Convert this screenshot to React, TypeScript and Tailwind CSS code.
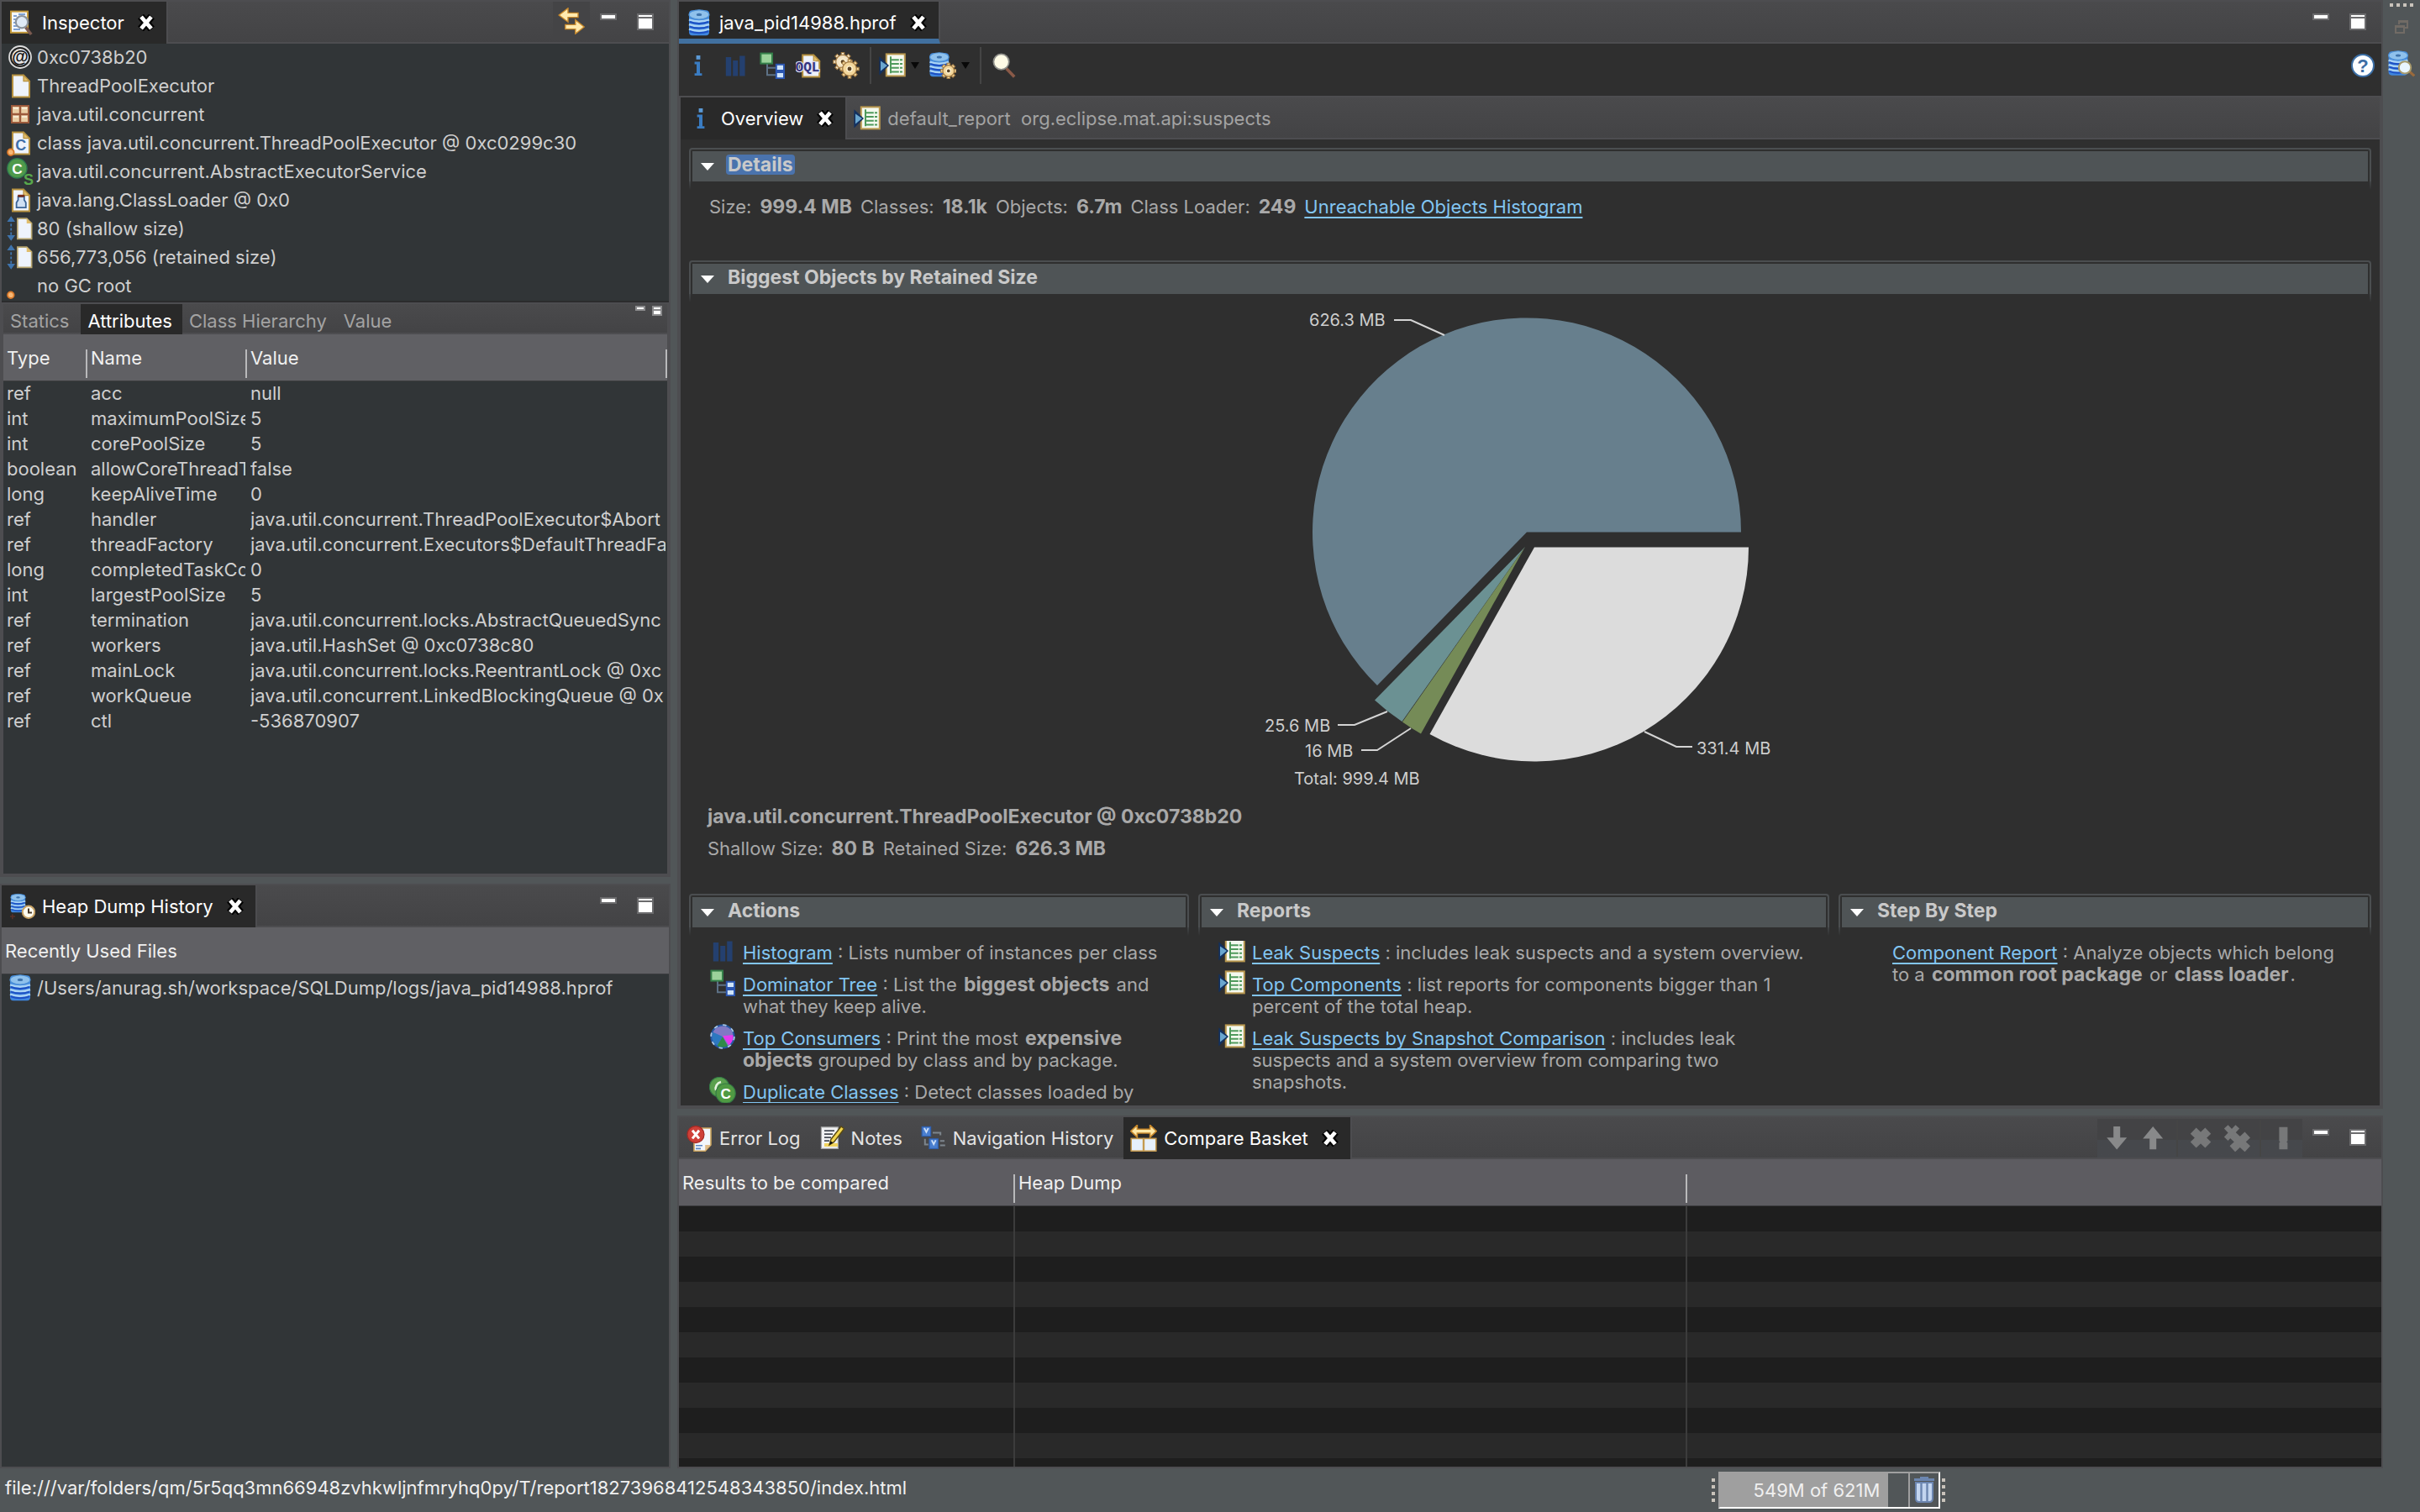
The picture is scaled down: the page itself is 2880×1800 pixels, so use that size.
import type { ReactNode } from "react";

/* ------------------------------------------------------------------ icons */

function Icon({ children, className = "" }: { children: ReactNode; className?: string }) {
  return (
    <svg viewBox="0 0 16 16" aria-hidden="true" className={`block size-8 shrink-0 ${className}`}>
      {children}
    </svg>
  );
}

const glyph = "'Liberation Sans', Arial, sans-serif";

const Cylinder = () => (
  <>
    <rect x="2" y="0.6" width="12" height="15" rx="2" fill="#3f86dd" />
    <path d="M2 6.2q6 2.2 12 0M2 9q6 2.2 12 0M2 11.8q6 2.2 12 0" stroke="#a9d3f5" strokeWidth="1.3" fill="none" />
    <path d="M2.4 7.5q5.6 2 11.2 0M2.4 10.3q5.6 2 11.2 0M2.4 13.1q5.6 2 11.2 0" stroke="#1c4fc4" strokeWidth="1" fill="none" />
    <ellipse cx="8" cy="3.2" rx="6" ry="2.8" fill="#8fc1ec" stroke="#4f93d8" strokeWidth="0.6" />
    <ellipse cx="8" cy="3.2" rx="1.6" ry="0.8" fill="#3f74ad" />
  </>
);

const DumpIcon = () => (
  <Icon>
    <Cylinder />
  </Icon>
);

const Gear = ({ cx, cy, r, fill = "#f3d79c", stroke = "#a07840" }: { cx: number; cy: number; r: number; fill?: string; stroke?: string }) => (
  <g transform={`translate(${cx} ${cy})`}>
    {[0, 45, 90, 135].map((a) => (
      <rect key={a} x={-r} y={-0.9} width={r * 2} height={1.8} fill={fill} stroke={stroke} strokeWidth="0.5" transform={`rotate(${a})`} />
    ))}
    <circle r={r * 0.74} fill={fill} stroke={stroke} strokeWidth="0.6" />
    <circle r={r * 0.28} fill="#5a4326" stroke="#fff3d2" strokeWidth="0.7" />
  </g>
);

const InspectorIcon = () => (
  <Icon>
    <rect x="1.5" y="1.3" width="10" height="12.6" fill="#f4f8fd" stroke="#c49a3c" />
    <path d="M3 4h2M3 6h2M3 8h2M3 10h2M3 12h4M6 3h4" stroke="#5b86c4" strokeWidth="0.8" />
    <circle cx="8" cy="7.6" r="3.6" fill="#dfeaf6" stroke="#8c949c" strokeWidth="1.1" />
    <path d="M10.3 10.8 13.6 15" stroke="#7a5a50" strokeWidth="1.8" />
  </Icon>
);

const HistoryIcon = () => (
  <Icon>
    <g transform="translate(0 0.4) scale(0.72)">
      <Cylinder />
    </g>
    <path d="M1 14h3M2.4 12.6v3" stroke="#5a3028" strokeWidth="0.8" />
    <circle cx="12" cy="11.4" r="3.6" fill="#fffdf0" stroke="#c9a468" />
    <path d="M12 9.2v2.6h2" stroke="#4b3a2a" fill="none" strokeWidth="1" />
  </Icon>
);

const AtIcon = () => (
  <Icon>
    <circle cx="8" cy="8" r="6.5" fill="#222" stroke="#dcdcdc" strokeWidth="0.9" />
    <circle cx="8" cy="8" r="5" fill="#e4e4e4" />
    <text x="8" y="11.2" textAnchor="middle" fontSize="10" fontWeight="700" fill="#111" fontFamily={glyph}>@</text>
  </Icon>
);

const PagePath = ({ x = 3 }: { x?: number }) => (
  <g transform={`translate(${x} 1.3)`}>
    <path d="M.5.5H7L10.5 4v9.5H.5z" fill="#eef3fc" stroke="#b6913f" />
    <path d="M7 .5V4h3.5z" fill="#e0bd6c" stroke="#b6913f" strokeWidth="0.6" />
  </g>
);

const Dot = () => <circle cx="2.4" cy="13.6" r="1.9" fill="#f7b774" stroke="#d9792b" strokeWidth="0.9" />;

const PageIcon = () => (
  <Icon>
    <PagePath />
  </Icon>
);

const PackageIcon = () => (
  <Icon>
    <rect x="3" y="3" width="10" height="10" fill="#e9cda4" stroke="#9c5a3c" />
    <path d="M8 2.6v10.8M2.6 8h10.8" stroke="#9c5a3c" strokeWidth="1.2" />
    <path d="M4 4.5h3M9 4.5h3M4 9.5h3M9 9.5h3" stroke="#f8ead2" strokeWidth="1" />
  </Icon>
);

const ClassFileIcon = () => (
  <Icon>
    <PagePath />
    <text x="8.4" y="12.4" textAnchor="middle" fontSize="9" fontWeight="700" fill="#3f6fa8" fontFamily={glyph}>C</text>
    <Dot />
  </Icon>
);

const SuperClassIcon = () => (
  <Icon>
    <circle cx="6.2" cy="6.2" r="5.8" fill="#4f9a4b" stroke="#2f7a50" strokeWidth="0.7" />
    <text x="6.2" y="9.3" textAnchor="middle" fontSize="8.6" fontWeight="700" fill="#fff" fontFamily={glyph}>C</text>
    <text x="13" y="15.8" textAnchor="middle" fontSize="9" fontWeight="700" fill="#58a84c" fontFamily={glyph}>S</text>
  </Icon>
);

const LoaderIcon = () => (
  <Icon>
    <PagePath />
    <path d="M6.8 6h3.6v2l1 1.6v3H5.8v-3l1-1.6z" fill="#cfe0f4" stroke="#3b6496" strokeWidth="0.9" />
    <path d="M6.6 5.6h4" stroke="#7a2f1c" strokeWidth="1.4" />
  </Icon>
);

const SizeIcon = () => (
  <Icon>
    <path d="M2.6 2.5v11" stroke="#3f74ad" strokeWidth="0.9" strokeDasharray="1.6 1" />
    <path d="M2.6.6 5 4H.2zM2.6 15.4l2.4-3.4H.2z" fill="#3f74ad" />
    <g transform="translate(6 1.6) scale(.84)">
      <path d="M.5.5H7L10.5 4v11H.5z" fill="#eef3fc" stroke="#b6a56f" />
      <path d="M7 .5V4h3.5z" fill="#e0bd6c" />
    </g>
  </Icon>
);

const RootIcon = () => (
  <Icon>
    <Dot />
  </Icon>
);

const SyncIcon = () => (
  <Icon>
    <path d="M6 .4v2.8h6v2.6H6v2.8L.6 4.5z" fill="#ffeab0" stroke="#c98a2c" strokeWidth="0.7" />
    <path d="M10.4 7.4v2.8H4.4v2.6h6v2.8l5.2-4.1z" fill="#ffeab0" stroke="#c98a2c" strokeWidth="0.7" />
  </Icon>
);

const InfoIcon = () => (
  <Icon>
    <path d="M5.8 5.8h3.2v6.8h1.2v1.4H5.8v-1.4H7V7.2H5.8z" fill="#3a7cc2" />
    <rect x="6.8" y="2" width="2.4" height="2.4" fill="#5b9ad6" />
  </Icon>
);

const BarsIcon = () => (
  <Icon>
    <path d="M2.4 3h3.2v11.2H2.4zM6.6 5h3v9.2h-3zM10.6 2.2h3.2v12h-3.2z" fill="#24406f" />
  </Icon>
);

const TreeIcon = () => (
  <Icon>
    <path d="M5 7v6.6h5M5 9.4h5" stroke="#5d7186" strokeWidth="1" fill="none" />
    <rect x="1.2" y="0.8" width="6.8" height="6" fill="#9bd29b" stroke="#35804a" />
    <rect x="10.4" y="7.4" width="4.6" height="3.6" fill="#cfe4fa" stroke="#2a55b0" />
    <rect x="10.4" y="12" width="4.6" height="3.6" fill="#cfe4fa" stroke="#2a55b0" />
  </Icon>
);

const OqlIcon = () => (
  <Icon>
    <g transform="translate(.6 0)">
      <PagePath />
    </g>
    <text x="7" y="11.4" textAnchor="middle" fontSize="8" fontWeight="700" fill="#33337c" stroke="#dcdcf0" strokeWidth="1.2" paintOrder="stroke" fontFamily="'Liberation Mono', monospace">OQL</text>
  </Icon>
);

const GearsIcon = () => (
  <Icon>
    <Gear cx={6} cy={5.8} r={5.6} fill="#f3e4c6" />
    <Gear cx={10} cy={10} r={5.6} />
  </Icon>
);

const ReportIcon = () => (
  <Icon>
    <rect x="4.4" y="1.2" width="11" height="13" fill="#f4f9ef" stroke="#b9984f" />
    <path d="M7 2.6v10M7 4.6h7M7 7h7M7 9.4h7M7 11.8h7" stroke="#4f9a5c" strokeWidth="1" fill="none" />
    <path d="M12.2 3.4v9.4" stroke="#f4f9ef" strokeWidth="0.6" />
    <path d="M.2 2.6 6 8 .2 13.8z" fill="#12305f" />
    <path d="M1 5.2 5 8l-4 3.2z" fill="#6aa6cf" />
  </Icon>
);

const DumpGearIcon = () => (
  <Icon>
    <g transform="translate(-1.6 0) scale(.94)">
      <Cylinder />
    </g>
    <Gear cx={11.4} cy={11.2} r={4.6} />
  </Icon>
);

const SearchIcon = () => (
  <Icon>
    <path d="M8.8 9.8 13.6 14.8" stroke="#8a5a48" strokeWidth="1.8" />
    <circle cx="5.8" cy="5.8" r="4.6" fill="#fffbe6" stroke="#8f8f8a" strokeWidth="0.9" />
  </Icon>
);

const HelpIcon = () => (
  <Icon>
    <circle cx="8" cy="8" r="6.5" fill="#fbfdff" stroke="#3b6ea5" />
    <text x="8" y="12" textAnchor="middle" fontSize="11" fontWeight="700" fill="#3b6ea5" fontFamily={glyph}>?</text>
  </Icon>
);

const ConsumersIcon = () => (
  <Icon>
    <circle cx="8" cy="8" r="6.6" fill="#8079c4" />
    <path d="M8 8 2.2 5.4a6.6 6.6 0 0 0 2.6 8.4z" fill="#2c78c0" />
    <path d="M8 8l-3.4 5.8a6.6 6.6 0 0 0 6.6 0z" fill="#2f8a4a" />
    <path d="M8 7.6l6.5-.6a6.6 6.6 0 0 1-2.7 6.2z" fill="#e53bef" />
    <circle cx="8" cy="8" r="6.8" fill="none" stroke="#2458a6" strokeWidth="1" />
    <circle cx="8" cy="8" r="6.9" fill="none" stroke="#a9c6e4" strokeWidth="0.9" strokeDasharray="2.2 3.2" />
  </Icon>
);

const DuplicateIcon = () => (
  <Icon>
    <circle cx="6" cy="6" r="5.8" fill="#5aa04e" stroke="#357a46" strokeWidth="0.6" />
    <path d="M4 8a4 4 0 0 1 3-5" stroke="#e6f3e0" strokeWidth="1.3" fill="none" />
    <circle cx="9.8" cy="9.8" r="5.8" fill="#4f9a43" stroke="#357a46" strokeWidth="0.6" />
    <text x="9.8" y="13" textAnchor="middle" fontSize="8.6" fontWeight="700" fill="#fff" fontFamily={glyph}>C</text>
  </Icon>
);

const ErrorLogIcon = () => (
  <Icon>
    <path d="M5 2h10v10l-3.4 3.6H5z" fill="#f2f6fc" stroke="#c9a25a" strokeWidth="0.8" />
    <path d="M15 12l-3.4 3.6V12z" fill="#e0bd8c" />
    <path d="M6 12.4h4M6 14.2h3" stroke="#5b86c4" strokeWidth="0.8" />
    <circle cx="6" cy="5.8" r="5" fill="#cf4038" stroke="#a52a25" strokeWidth="0.6" />
    <path d="M4 3.4 8 8.2M8 3.4 4 8.2" stroke="#fff" strokeWidth="1.5" />
  </Icon>
);

const NotesIcon = () => (
  <Icon>
    <rect x="2.2" y="1.4" width="10" height="12.8" fill="#f1f2f4" stroke="#9f9f9f" strokeWidth="0.6" />
    <path d="M4 3.6h6M4 5.6h5M4 7.6h4M4 9.6h3" stroke="#474c55" strokeWidth="0.9" />
    <path d="M4 12h8" stroke="#f1d35c" strokeWidth="2" />
    <path d="m7 12 1-3.4L14 1l1.8 1.4-6 7.8z" fill="#f1d44e" stroke="#5a4a12" strokeWidth="0.7" />
    <path d="m7 12 .8-2.4 1.4 1.2z" fill="#111" />
  </Icon>
);

const NavIcon = () => (
  <Icon>
    <rect x="1.6" y="1.2" width="5.2" height="5.6" fill="#4a7fd0" stroke="#2f5fae" strokeWidth="0.6" />
    <path d="M3 2 4.2 4.4 5.4 2" fill="none" stroke="#cfe0f8" strokeWidth="0.9" />
    <rect x="6" y="8.4" width="5.2" height="5.8" fill="#4a7fd0" stroke="#2f5fae" strokeWidth="0.6" />
    <path d="M7.4 9.2 8.6 11.6 9.8 9.2" fill="none" stroke="#cfe0f8" strokeWidth="0.9" />
    <path d="M8 4.8h4.6v1.4M3.4 8.4v3.4h2M12.4 9.6h2.6M12.4 12.2h3" fill="none" stroke="#7d858d" strokeWidth="1" />
  </Icon>
);

const CompareIcon = () => (
  <Icon>
    <path d="M.4 3.8 4.2.2v2.4h7.6V.2l3.8 3.6-3.8 3.6V5H4.2v2.4z" fill="#ffe9a8" stroke="#c98a2c" strokeWidth="0.8" />
    <rect x=".6" y="8.2" width="7.2" height="7.4" fill="#e6f0fb" stroke="#c49a50" strokeWidth="0.8" />
    <rect x="8.2" y="8.2" width="7.2" height="7.4" fill="#e6f0fb" stroke="#c49a50" strokeWidth="0.8" />
  </Icon>
);

const DownIcon = () => (
  <Icon>
    <path d="M5.6 1h4v6.6h4L7.6 14.8 1.6 7.6h4z" fill="#88898a" />
  </Icon>
);

const UpIcon = () => (
  <Icon>
    <path d="M5.6 14.6h4V8.2h4L7.6 1 1.6 8.2h4z" fill="#88898a" />
  </Icon>
);

const RemoveIcon = () => (
  <Icon>
    <path d="M3.6 3.6 12.4 12M12.4 3.6 3.6 12" stroke="#777879" strokeWidth="5" />
  </Icon>
);

const RemoveAllIcon = () => (
  <Icon>
    <path d="M1.6 1.2 8.4 8.4M8.4 1.2 1.6 8.4" stroke="#777879" strokeWidth="3.2" />
    <path d="M5.4 6 14.4 14.4M14.4 6 5.4 14.4" stroke="#777879" strokeWidth="4.8" />
  </Icon>
);

const RunIcon = () => (
  <Icon>
    <path d="M5.2 1.4h5v8.2l-.6.6.6.6v3.8h-5v-3.8l.6-.6-.6-.6z" fill="#777879" />
  </Icon>
);

const CloseGlyph = () => (
  <svg viewBox="0 0 20 20" aria-hidden="true" className="block size-5 shrink-0">
    <path d="M3.5 2.5 16.5 17.5M16.5 2.5 3.5 17.5" stroke="#000" strokeWidth="9" />
    <path d="M4 3 16 17M16 3 4 17" stroke="#fff" strokeWidth="4.8" />
  </svg>
);

/* ---------------------------------------------------------------- widgets */

function Tab({ icon, children, active, accent, close, tone = "text-white" }: {
  icon: ReactNode;
  children: ReactNode;
  active?: boolean;
  accent?: boolean;
  close?: boolean;
  tone?: string;
}) {
  return (
    <div
      className={`flex h-[50px] shrink-0 items-center pl-2 ${
        active ? "border-r-2 border-r-[#4d4d50] bg-[#292929] pr-[14px]" : "pr-3"
      } ${accent ? "border-b-[6px] border-b-[#41709f] pt-[6px]" : ""}`}
    >
      <button type="button" role="tab" aria-selected={!!active} className={`flex items-center gap-2 whitespace-pre ${tone}`}>
        {icon}
        {children}
      </button>
      {close && (
        <button type="button" aria-label="Close" className="ml-4">
          <CloseGlyph />
        </button>
      )}
    </div>
  );
}

function WindowButtons() {
  return (
    <div className="flex items-start gap-6 pt-[14px] pr-[18px]">
      <button type="button" aria-label="Minimize" className="h-2 w-5 border-2 border-[#6b6b6d] bg-white" />
      <button type="button" aria-label="Maximize" className="flex size-5 flex-col gap-[2px] border-2 border-[#6b6b6d] bg-[#6b6b6d]">
        <span className="h-[2px] w-full bg-white" />
        <span className="w-full flex-1 bg-white" />
      </button>
    </div>
  );
}

function TabBar({ children, tools }: { children: ReactNode; tools?: ReactNode }) {
  return (
    <div className="flex h-[50px] shrink-0 bg-linear-to-b from-[#4a4a4c] to-[#434345] shadow-[inset_0_-2px_0_#4d4d50]">
      <div role="tablist" className="flex min-w-0 flex-1">{children}</div>
      {tools}
    </div>
  );
}

function Section({ title, focused, children }: { title: string; focused?: boolean; children: ReactNode }) {
  return (
    <section className="min-w-0">
      <div className="rounded-t-[4px] border-x-2 border-t-2 border-[#4b4e50] px-[2px] pt-[2px]">
        <button type="button" aria-expanded="true" className="flex h-9 w-full items-center gap-3.5 bg-[#4f5456] pl-[10px] text-left text-[23px] font-bold text-[#c9c9c9]">
          <svg viewBox="0 0 16 9" aria-hidden="true" className="block h-[9px] w-4">
            <path d="M0 0h16L8 9z" fill="#fff" />
          </svg>
          <span className={`mb-1 rounded-[4px] px-[2px] leading-6 ${focused ? "bg-[#4a73ad]" : ""}`}>{title}</span>
        </button>
      </div>
      <div className="flex h-[10px] justify-between">
        <span className="w-[2px] bg-linear-to-b from-[#424547] to-transparent" />
        <span className="w-[2px] bg-linear-to-b from-[#424547] to-transparent" />
      </div>
      {children}
    </section>
  );
}

function Link({ children }: { children: ReactNode }) {
  return (
    <a href="#" className="text-[#82c5f2] underline decoration-2 underline-offset-4 [text-decoration-skip-ink:none]">
      {children}
    </a>
  );
}

function Entry({ icon, link, children }: { icon?: ReactNode; link: string; children: ReactNode }) {
  return (
    <li className="flex gap-2">
      <span className="-mt-[5px] h-[31px] w-8 shrink-0">{icon}</span>
      <p className="min-w-0 whitespace-nowrap">
        <Link>{link}</Link> : {children}
      </p>
    </li>
  );
}

const Strong = ({ children }: { children: ReactNode }) => <b className="text-[23px] leading-none font-bold">{children}</b>;
const B = ({ children }: { children: ReactNode }) => <b className="mx-[2px] text-[23px] leading-none font-bold">{children}</b>;

function HeadCell({ children, line = true }: { children?: ReactNode; line?: boolean }) {
  return (
    <th scope="col" className="h-[55px] p-0 pt-[18px] pb-[3px] text-left font-normal">
      <div className={`h-[34px] pl-1 leading-5 ${line ? "border-r-2 border-[#b9b9bb]" : ""}`}>{children}</div>
    </th>
  );
}

/* ------------------------------------------------------------------- data */

const inspected: [ReactNode, string][] = [
  [<AtIcon />, "0xc0738b20"],
  [<PageIcon />, "ThreadPoolExecutor"],
  [<PackageIcon />, "java.util.concurrent"],
  [<ClassFileIcon />, "class java.util.concurrent.ThreadPoolExecutor @ 0xc0299c30"],
  [<SuperClassIcon />, "java.util.concurrent.AbstractExecutorService"],
  [<LoaderIcon />, "java.lang.ClassLoader @ 0x0"],
  [<SizeIcon />, "80 (shallow size)"],
  [<SizeIcon />, "656,773,056 (retained size)"],
  [<RootIcon />, "no GC root"],
];

const attributes = [
  ["ref", "acc", "null"],
  ["int", "maximumPoolSize", "5"],
  ["int", "corePoolSize", "5"],
  ["boolean", "allowCoreThreadT", "false"],
  ["long", "keepAliveTime", "0"],
  ["ref", "handler", "java.util.concurrent.ThreadPoolExecutor$Abort"],
  ["ref", "threadFactory", "java.util.concurrent.Executors$DefaultThreadFa"],
  ["long", "completedTaskCo", "0"],
  ["int", "largestPoolSize", "5"],
  ["ref", "termination", "java.util.concurrent.locks.AbstractQueuedSync"],
  ["ref", "workers", "java.util.HashSet @ 0xc0738c80"],
  ["ref", "mainLock", "java.util.concurrent.locks.ReentrantLock @ 0xc"],
  ["ref", "workQueue", "java.util.concurrent.LinkedBlockingQueue @ 0x"],
  ["ref", "ctl", "-536870907"],
];

/* ----------------------------------------------------------------- panels */

function Inspector() {
  return (
    <div className="flex min-h-0 flex-col overflow-hidden border-2 border-[#4d4d50] bg-[#313537]">
      <TabBar
        tools={
          <>
            <button type="button" aria-label="Link with snapshot" className="mr-3 mb-1 flex w-11 items-center justify-center bg-[#444446]">
              <SyncIcon />
            </button>
            <WindowButtons />
          </>
        }
      >
        <Tab icon={<InspectorIcon />} active close>Inspector</Tab>
      </TabBar>

      <ul className="shrink-0 border-b-2 border-[#2b2c2d] text-[#cfcfcf]">
        {inspected.map(([icon, label]) => (
          <li key={label} className="flex h-[34px] items-center gap-1 pb-[2px] pl-[6px] whitespace-nowrap">
            {icon}
            {label}
          </li>
        ))}
      </ul>

      <div className="flex min-h-0 flex-1 flex-col border-2 border-[#4d4d50]">
        <div className="flex h-9 shrink-0 items-stretch bg-linear-to-b from-[#4a4a4c] to-[#434345] text-[#a3a3a3] shadow-[inset_0_-2px_0_#4d4d50]">
          <div role="tablist" className="flex flex-1">
            <button type="button" role="tab" className="pt-1 pr-[14px] pl-2">Statics</button>
            <button type="button" role="tab" aria-selected="true" className="bg-[#292929] px-2 pt-1 pr-3 text-white">Attributes</button>
            <button type="button" role="tab" className="pt-1 pr-3 pl-2">Class Hierarchy</button>
            <button type="button" role="tab" className="pt-1 pr-3 pl-2">Value</button>
          </div>
          <div className="flex items-start gap-2 pt-[2px] pr-[6px]">
            <button type="button" aria-label="Minimize" className="h-[6px] w-3 border-2 border-[#8b8b8d] bg-white" />
            <button type="button" aria-label="Maximize" className="flex size-3 flex-col gap-[2px] border-2 border-[#8b8b8d] bg-[#8b8b8d]">
              <span className="h-[2px] w-full bg-white" />
              <span className="w-full flex-1 bg-white" />
            </button>
          </div>
        </div>
        <table className="w-full table-fixed border-collapse text-[#cfcfcf]">
          <colgroup>
            <col className="w-[100px]" />
            <col className="w-[190px]" />
            <col />
          </colgroup>
          <thead className="border-b border-[#3c3d3f] bg-[#606064] text-[#f0f0f0]">
            <tr>
              <HeadCell>Type</HeadCell>
              <HeadCell>Name</HeadCell>
              <HeadCell>Value</HeadCell>
            </tr>
          </thead>
          <tbody>
            {attributes.map((row) => (
              <tr key={row[1]}>
                {row.map((cell, i) => (
                  <td key={i} className="h-[30px] p-0 pr-[2px] pl-1">
                    <div className="overflow-hidden pb-[2px] leading-[28px] whitespace-nowrap">{cell}</div>
                  </td>
                ))}
              </tr>
            ))}
          </tbody>
        </table>
      </div>
    </div>
  );
}

function History() {
  return (
    <div className="flex min-h-0 flex-col overflow-hidden border-2 border-[#4d4d50] bg-[#313537]">
      <TabBar tools={<WindowButtons />}>
        <Tab icon={<HistoryIcon />} active close>Heap Dump History</Tab>
      </TabBar>
      <table className="w-full border-collapse text-[#cfcfcf]">
        <thead className="border-b border-[#3c3d3f] bg-[#606064] text-[#f0f0f0]">
          <tr>
            <HeadCell line={false}>Recently Used Files</HeadCell>
          </tr>
        </thead>
        <tbody>
          <tr>
            <td className="p-0">
              <div className="flex h-[34px] items-center gap-1 pb-[2px] pl-[6px] whitespace-nowrap">
                <DumpIcon />
                /Users/anurag.sh/workspace/SQLDump/logs/java_pid14988.hprof
              </div>
            </td>
          </tr>
        </tbody>
      </table>
    </div>
  );
}

function PieChart() {
  return (
    <svg
      viewBox="1471 360 700 590"
      role="img"
      aria-label="Biggest objects by retained size"
      className="mx-auto block h-[590px] w-[700px]"
      fontFamily="Inter, sans-serif"
      fontSize="20"
      fill="#cdcdcd"
    >
      <path d="M1817 633.5H2072A255 255 0 1 0 1639 816z" fill="#677f8d" />
      <path d="M1826 651.5H2081A255 255 0 0 1 1701.5 874z" fill="#dcdcdc" />
      <path d="M1815 651 1636 833.5A255 255 0 0 0 1668.5 859z" fill="#6b9193" />
      <path d="M1815 651 1669 859.5A255 255 0 0 0 1691 873.6z" fill="#758b57" />
      <g fill="none" stroke="#d4d4d4" strokeWidth="2">
        <path d="M1659 381h20l40 18" />
        <path d="M1592 863h20l39-16" />
        <path d="M1620 893h19l40-26" />
        <path d="M2014 889h-19l-38-18" />
      </g>
      <text x="1558" y="388">626.3 MB</text>
      <text x="1505" y="871">25.6 MB</text>
      <text x="1553" y="901">16 MB</text>
      <text x="2019" y="898">331.4 MB</text>
      <text x="1540" y="934">Total: 999.4 MB</text>
    </svg>
  );
}

const Divider = () => <span className="h-11 w-[2px] bg-[#454545]" />;
const Caret = () => (
  <svg viewBox="0 0 10 8" aria-hidden="true" className="block h-2 w-[10px]">
    <path d="M0 0h10L5 8z" fill="#080808" />
  </svg>
);

function Tool({ label, children }: { label: string; children: ReactNode }) {
  return (
    <button type="button" aria-label={label} className="flex items-center gap-[6px]">
      {children}
    </button>
  );
}

function Editor() {
  return (
    <div className="flex min-h-0 flex-col overflow-hidden border-2 border-[#4d4d50] bg-[#2f2f2f]">
      <TabBar tools={<WindowButtons />}>
        <Tab icon={<DumpIcon />} active accent close>java_pid14988.hprof</Tab>
      </TabBar>

      <div className="flex h-[62px] shrink-0 items-start justify-between pt-1 pr-[6px] pl-[7px]">
        <div className="flex h-11 items-center gap-3">
          <Tool label="Overview"><InfoIcon /></Tool>
          <Tool label="Histogram"><BarsIcon /></Tool>
          <Tool label="Dominator tree"><TreeIcon /></Tool>
          <Tool label="Query studio"><OqlIcon /></Tool>
          <Tool label="Thread overview"><GearsIcon /></Tool>
          <Divider />
          <div className="-ml-[3px] flex gap-3">
            <Tool label="Run report"><ReportIcon /><Caret /></Tool>
            <Tool label="Query browser"><DumpGearIcon /><Caret /></Tool>
          </div>
          <Divider />
          <Tool label="Search"><SearchIcon /></Tool>
        </div>
        <div className="flex h-11 items-center">
          <Tool label="Help"><HelpIcon /></Tool>
        </div>
      </div>

      <div className="flex min-h-0 flex-1 flex-col border-2 border-[#4d4d50]">
        <TabBar>
          <Tab icon={<InfoIcon />} active close>Overview</Tab>
          <Tab icon={<ReportIcon />} tone="text-[#a3a3a3]">{"default_report  org.eclipse.mat.api:suspects"}</Tab>
        </TabBar>

        <div className="min-h-0 flex-1 overflow-hidden px-[10px] pt-[10px] text-[#a9a9a9]">
          <Section title="Details" focused>
            <div className="flex h-[84px] items-baseline gap-[10px] pt-[5px] pl-6 leading-[30px] whitespace-nowrap">
              <span>Size:</span>
              <Strong>999.4 MB</Strong>
              <span>Classes:</span>
              <Strong>18.1k</Strong>
              <span>Objects:</span>
              <Strong>6.7m</Strong>
              <span>Class Loader:</span>
              <Strong>249</Strong>
              <Link>Unreachable Objects Histogram</Link>
            </div>
          </Section>

          <Section title="Biggest Objects by Retained Size">
            <PieChart />
            <div className="pt-[3px] pb-[35px] pl-[22px] leading-[38px]">
              <p className="text-[23px] font-bold">java.util.concurrent.ThreadPoolExecutor @ 0xc0738b20</p>
              <p className="flex items-baseline gap-[10px]">
                <span>Shallow Size:</span>
                <Strong>80 B</Strong>
                <span>Retained Size:</span>
                <Strong>626.3 MB</Strong>
              </p>
            </div>
          </Section>

          <div className="grid grid-cols-[595fr_751fr_634fr] gap-x-[11px] leading-[26px]">
            <Section title="Actions">
              <div className="pt-[6px] pl-6">
                <ul className="flex flex-col gap-3 overflow-hidden pt-px">
                  <Entry icon={<BarsIcon />} link="Histogram">Lists number of instances per class</Entry>
                  <Entry icon={<TreeIcon />} link="Dominator Tree">
                    List the <B>biggest objects</B> and<br />what they keep alive.
                  </Entry>
                  <Entry icon={<ConsumersIcon />} link="Top Consumers">
                    Print the most <B>expensive</B><br /><Strong>objects</Strong> grouped by class and by package.
                  </Entry>
                  <Entry icon={<DuplicateIcon />} link="Duplicate Classes">Detect classes loaded by</Entry>
                </ul>
              </div>
            </Section>
            <Section title="Reports">
              <div className="pt-[6px] pl-6">
                <ul className="flex flex-col gap-3 overflow-hidden pt-px">
                  <Entry icon={<ReportIcon />} link="Leak Suspects">includes leak suspects and a system overview.</Entry>
                  <Entry icon={<ReportIcon />} link="Top Components">
                    list reports for components bigger than 1<br />percent of the total heap.
                  </Entry>
                  <Entry icon={<ReportIcon />} link="Leak Suspects by Snapshot Comparison">
                    includes leak<br />suspects and a system overview from comparing two<br />snapshots.
                  </Entry>
                </ul>
              </div>
            </Section>
            <Section title="Step By Step">
              <div className="pt-[6px] pl-6">
                <ul className="overflow-hidden pt-px">
                  <Entry link="Component Report">
                    Analyze objects which belong<br />to a <B>common root package</B> or <B>class loader</B>.
                  </Entry>
                </ul>
              </div>
            </Section>
          </div>
        </div>
      </div>
    </div>
  );
}

function CompareBasket() {
  return (
    <div className="flex min-h-0 flex-col overflow-hidden border-2 border-[#4d4d50] bg-[#1e1e1e]">
      <TabBar
        tools={
          <>
            <div className="mt-[2px] mr-[12px] mb-[2px] flex items-center gap-[11px] bg-linear-to-b from-[#434345] from-55% to-[#46484c] to-55% pr-[6px] pl-2">
              <Tool label="Move down"><DownIcon /></Tool>
              <Tool label="Move up"><UpIcon /></Tool>
              <Divider />
              <Tool label="Remove"><RemoveIcon /></Tool>
              <Tool label="Remove all"><RemoveAllIcon /></Tool>
              <Divider />
              <Tool label="Compare"><RunIcon /></Tool>
            </div>
            <WindowButtons />
          </>
        }
      >
        <Tab icon={<ErrorLogIcon />} tone="text-[#e4e4e4]">Error Log</Tab>
        <Tab icon={<NotesIcon />} tone="text-[#e4e4e4]">Notes</Tab>
        <Tab icon={<NavIcon />} tone="text-[#e4e4e4]">Navigation History</Tab>
        <Tab icon={<CompareIcon />} active close>Compare Basket</Tab>
      </TabBar>
      <table className="w-full table-fixed border-collapse">
        <colgroup>
          <col className="w-[400px]" />
          <col className="w-[800px]" />
          <col />
        </colgroup>
        <thead className="border-b border-[#3c3d3f] bg-[#5d5c61] text-[#f0f0f0]">
          <tr>
            <HeadCell>Results to be compared</HeadCell>
            <HeadCell>Heap Dump</HeadCell>
            <HeadCell line={false} />
          </tr>
        </thead>
        <tbody>
          {Array.from({ length: 11 }, (_, i) => (
            <tr key={i} className="h-[30px] odd:bg-[#1e1e1e] even:bg-[#292929]">
              <td className="p-0"><div className="h-[30px] border-r-2 border-[#3c3c3c]" /></td>
              <td className="p-0"><div className="h-[30px] border-r-2 border-[#3c3c3c]" /></td>
              <td className="p-0" />
            </tr>
          ))}
        </tbody>
      </table>
    </div>
  );
}

function Grip() {
  return (
    <span className="flex flex-col gap-1">
      {[0, 1, 2, 3].map((i) => (
        <span key={i} className="size-1 bg-[#c9c3bb]" />
      ))}
    </span>
  );
}

function StatusBar() {
  return (
    <footer className="flex h-[52px] shrink-0 items-center text-[#f0f0f0]">
      <p className="min-w-0 flex-[2036] overflow-hidden pb-[7px] pl-[6px] whitespace-nowrap">
        file:///var/folders/qm/5r5qq3mn66948zvhkwljnfmryhq0py/T/report18273968412548343850/index.html
      </p>
      <Grip />
      <div className="mr-[2px] ml-1 flex h-11 w-[264px] border-2 border-t-[#a0a0a0] border-r-white border-b-white border-l-[#a0a0a0]">
        <div className="flex w-[200px] items-center justify-end bg-[#9f9f9f] pr-[10px]">549M of 621M</div>
        <div className="w-[26px] border-r-2 border-[#9f9f9f]" />
        <button type="button" aria-label="Run Garbage Collector" className="flex flex-1 items-center justify-center">
          <svg viewBox="0 0 26 32" aria-hidden="true" className="block h-8 w-[26px]">
            <path d="M1 3.5h24M8 1.5h10" stroke="#6c86b0" strokeWidth="3" />
            <path d="M3 7h20v19q0 4-4 4H7q-4 0-4-4z" fill="#c3d5ef" stroke="#6c86b0" strokeWidth="2" />
            <path d="M9.5 8v21M16.5 8v21" stroke="#6c86b0" strokeWidth="2.4" />
          </svg>
        </button>
      </div>
      <Grip />
      <div className="flex-[566]" />
    </footer>
  );
}

function TrimBar() {
  return (
    <aside className="flex w-11 shrink-0 flex-col items-center pt-1">
      <span className="flex gap-1">
        {[0, 1, 2, 3].map((i) => (
          <span key={i} className="size-1 bg-[#c9c3bb]" />
        ))}
      </span>
      <button type="button" aria-label="Restore" className="mt-4">
        <svg viewBox="0 0 16 16" aria-hidden="true" className="block size-4">
          <path d="M5 5V1h10v8h-4" fill="none" stroke="#716b65" strokeWidth="2" />
          <path d="M1 7h10v8H1z" fill="none" stroke="#716b65" strokeWidth="2" />
          <path d="M5 2h10M1 8h10" stroke="#716b65" strokeWidth="2" />
        </svg>
      </button>
      <button type="button" aria-label="Memory Analysis" className="mt-5">
        <Icon>
          <g transform="translate(-1.6 0) scale(.95)">
            <Cylinder />
          </g>
          <path d="m12.6 12.4 3 2.8" stroke="#9a6a3c" strokeWidth="1.6" />
          <circle cx="10" cy="10.2" r="3.6" fill="#e9f5ff" stroke="#a79a6c" strokeWidth="1" />
        </Icon>
      </button>
    </aside>
  );
}

export default function App() {
  return (
    <div className="flex h-screen flex-col overflow-hidden bg-[#515658] font-['Inter',sans-serif] text-[22px] leading-[26px]">
      <div className="flex min-h-0 flex-1">
        <main className="grid min-w-0 flex-1 grid-cols-[798fr_2030fr] gap-x-2">
          <div className="grid min-h-0 min-w-0 grid-rows-[1044fr_696fr] gap-y-2">
            <Inspector />
            <History />
          </div>
          <div className="grid min-h-0 min-w-0 grid-rows-[1320fr_420fr] gap-y-2">
            <Editor />
            <CompareBasket />
          </div>
        </main>
        <TrimBar />
      </div>
      <StatusBar />
    </div>
  );
}
